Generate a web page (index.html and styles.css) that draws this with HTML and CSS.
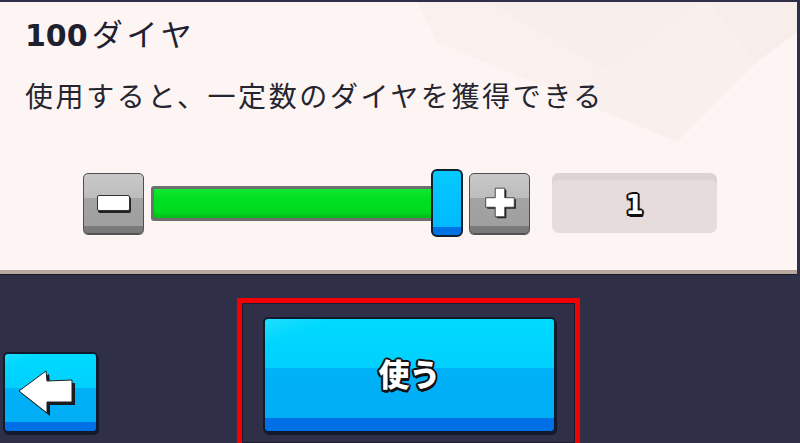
FILE: index.html
```html
<!DOCTYPE html>
<html lang="ja">

<head>
    <meta charset="utf-8">
    <title>100ダイヤ</title>
    <link rel="stylesheet" href="styles.css">
</head>

<body>
    <section class="panel">
        <svg class="deko" width="420" height="270" viewBox="0 0 420 270">
            <polygon points="110,0 230,70 330,0" fill="#f8eeec" />
            <polygon points="60,40 180,90 230,70 110,0 40,0" fill="#faf0ee" />
            <polygon points="180,90 300,140 380,60 330,0 230,70" fill="#f9efed" />
            <polygon points="330,0 380,60 420,30 420,0" fill="#f7edeb" />
        </svg>
        <h1 class="titel"><span class="tal">100</span>ダイヤ</h1>
        <p class="beskrivelse">使用すると、一定数のダイヤを獲得できる</p>

        <div class="maengde">
            <button class="knap graa">
                <span class="minus"></span>
            </button>
            <div class="slider">
                <div class="spor"><div class="fyld"></div></div>
                <div class="greb"></div>
            </div>
            <button class="knap graa">
                <svg width="36" height="36" viewBox="0 0 34 34">
                    <path d="M12.5 3 H21.5 V12 H30.5 V21 H21.5 V30 H12.5 V21 H3.5 V12 H12.5 Z" fill="#222" transform="translate(1.5,1.5)" />
                    <path d="M12.5 3 H21.5 V12 H30.5 V21 H21.5 V30 H12.5 V21 H3.5 V12 H12.5 Z" fill="#fff" stroke="#333" stroke-width="0.8" />
                </svg>
            </button>
            <div class="vaerdi"><span>1</span></div>
        </div>
    </section>

    <footer class="bund">
        <button class="blaa tilbage">
            <svg width="60" height="48" viewBox="0 0 60 48">
                <polygon points="2,22 29,2 30,12 55,11 55,33 30,33 30,44" fill="#1a1a22" transform="translate(3,3)" />
                <polygon points="2,22 29,2 30,12 55,11 55,33 30,33 30,44" fill="#fff" stroke="#222" stroke-width="1" />
            </svg>
        </button>
        <div class="markering">
            <button class="blaa brug">使う</button>
        </div>
    </footer>
</body>

</html>
```

FILE: styles.css
```css
body {
    margin: 0;
    background: #2f3047;
    font-family: "Noto Sans CJK JP", "Noto Sans", sans-serif;
    width: 800px;
    height: 443px;
    overflow: hidden;
}

.panel {
    position: relative;
    margin: 2px 3px 0 0;
    height: 268px;
    background: #fdf5f3;
    box-shadow: 0 4px 0 #b9a69f, 0 5px 0 #1c1c28;
    overflow: hidden;
}

.deko {
    position: absolute;
    right: 0;
    top: 0;
}

.titel {
    position: relative;
    margin: 0;
    padding: 12px 0 0 25px;
    font-size: 31px;
    font-weight: 400;
    line-height: 38px;
    letter-spacing: 4px;
    color: #1e2030;
}

.tal {
    font-family: "DejaVu Sans", sans-serif;
    font-weight: 700;
    font-size: 30px;
    letter-spacing: 0;
    margin-right: 4px;
}

.beskrivelse {
    position: relative;
    margin: 0;
    padding: 22px 0 0 25px;
    font-size: 28px;
    line-height: 36px;
    letter-spacing: 2.6px;
    color: #25252f;
}

.maengde {
    position: relative;
    display: flex;
    align-items: center;
    margin-top: 56px;
    padding-left: 83px;
    height: 68px;
}

button {
    font-family: inherit;
    padding: 0;
    cursor: pointer;
}

.knap {
    width: 61px;
    height: 61px;
    display: flex;
    align-items: center;
    justify-content: center;
    border: 1.5px solid #4f4f4f;
    border-radius: 5px;
    background: linear-gradient(#c8c8c8 0%, #bdbdbd 40%, #a3a3a3 40%, #9f9f9f 88%, #7a7a7a 88%);
    box-shadow: 0 1px 0 #555;
}

.minus {
    width: 31px;
    height: 14px;
    background: #fff;
    border: 1px solid #333;
    border-radius: 2px;
    box-shadow: 1px 2px 0 #222;
}

.slider {
    display: flex;
    align-items: center;
    margin-left: 7px;
}

.spor {
    width: 289px;
    height: 35px;
    box-sizing: border-box;
    border: 3px solid #6f6f6f;
    border-radius: 3px;
    background: #777;
}

.fyld {
    height: 100%;
    background: linear-gradient(#12e834 0%, #00e022 30%, #00da1e 80%, #00b81a 100%);
}

.greb {
    width: 32px;
    height: 68px;
    box-sizing: border-box;
    margin-left: -9px;
    border: 2px solid #11202e;
    border-radius: 6px;
    background: linear-gradient(#06c8ff 0%, #00baff 88%, #0072e4 88%);
}

.slider + .knap {
    margin-left: 6px;
}

.vaerdi {
    width: 165px;
    height: 60px;
    margin-left: 22px;
    border-radius: 7px;
    background: #e5dcdb;
    box-shadow: inset 0 7px 0 #ddd3d2;
    display: flex;
    align-items: center;
    justify-content: center;
}

.vaerdi span,
.brug {
    color: #fff;
    font-weight: 900;
    text-shadow: -1.5px -1.5px 0 #111, 1.5px -1.5px 0 #111, -1.5px 1.5px 0 #111, 1.5px 1.5px 0 #111, 0 -2px 0 #111, 0 2px 0 #111, -2px 0 0 #111, 2px 0 0 #111, 1px 3px 0 #111;
}

.vaerdi span {
    font-family: "DejaVu Sans", sans-serif;
    font-size: 26px;
    margin-top: 4px;
}

.bund {
    display: flex;
    align-items: flex-start;
    padding-left: 3px;
}

.blaa {
    border: 2px solid #0f1b2a;
    border-radius: 5px;
    background: linear-gradient(160deg, rgba(255, 255, 255, 0.12) 0%, rgba(255, 255, 255, 0) 12%), linear-gradient(#00dafe 0%, #00d0ff 44%, #00b1f7 44%, #00aef6 88%, #0070e6 88%);
    box-shadow: 1px 2px 0 #15182a;
}

.tilbage {
    width: 95px;
    height: 81px;
    margin-top: 82px;
    display: flex;
    align-items: center;
    justify-content: center;
    padding-right: 8px;
}

.markering {
    margin-left: 139px;
    margin-top: 28px;
    width: 343px;
    height: 150px;
    box-sizing: border-box;
    border: 5px solid #f40000;
    padding: 14px 0 0 21px;
    box-shadow: inset 0 0 0 1px #1c1d2c;
}

.brug {
    width: 293px;
    height: 116px;
    font-size: 31px;
    padding-bottom: 6px;
}
```
